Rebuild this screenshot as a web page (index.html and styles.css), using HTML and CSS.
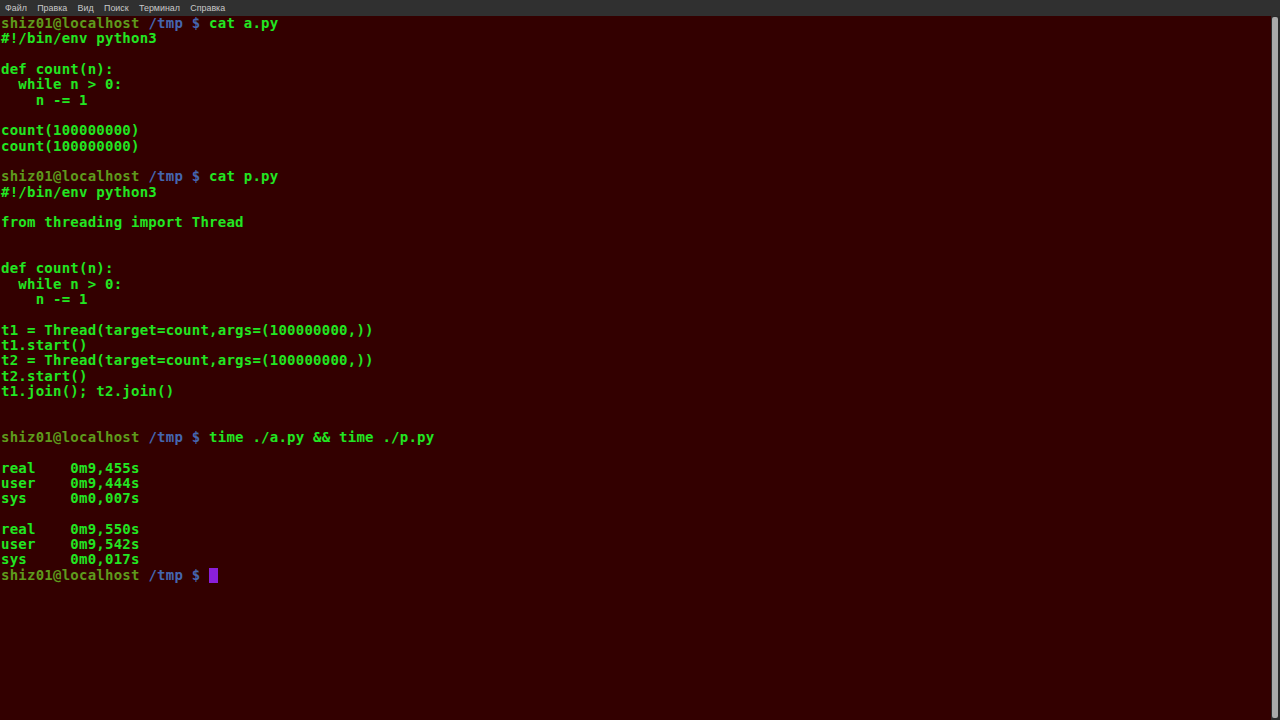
FILE: index.html
```html
<!DOCTYPE html>
<html lang="ru">

<head>
    <meta charset="UTF-8">
    <meta name="viewport" content="width=device-width, initial-scale=1.0">
    <title>Терминал</title>
    <link rel="stylesheet" href="styles.css">
</head>

<body class="term">
    <ul class="menuBar">
        <li>Файл</li>
        <li>Правка</li>
        <li>Вид</li>
        <li>Поиск</li>
        <li>Терминал</li>
        <li>Справка</li>
    </ul>
    <section class="termWrap">
        <pre class="screen"><span class="user">shiz01@localhost</span> <span class="path">/tmp $</span> cat a.py
#!/bin/env python3

def count(n):
  while n &gt; 0:
    n -= 1

count(100000000)
count(100000000)

<span class="user">shiz01@localhost</span> <span class="path">/tmp $</span> cat p.py
#!/bin/env python3

from threading import Thread


def count(n):
  while n &gt; 0:
    n -= 1

t1 = Thread(target=count,args=(100000000,))
t1.start()
t2 = Thread(target=count,args=(100000000,))
t2.start()
t1.join(); t2.join()


<span class="user">shiz01@localhost</span> <span class="path">/tmp $</span> time ./a.py &amp;&amp; time ./p.py

real    0m9,455s
user    0m9,444s
sys     0m0,007s

real    0m9,550s
user    0m9,542s
sys     0m0,017s
<span class="user">shiz01@localhost</span> <span class="path">/tmp $</span> <span class="cursor"> </span></pre>
        <div class="scrollBar">
            <div class="thumb"></div>
        </div>
    </section>
</body>

</html>
```

FILE: styles.css
```css
html,
body {
    margin: 0;
    padding: 0;
    height: 100%;
    overflow: hidden;
}

.term {
    display: flex;
    flex-direction: column;
    background: #330000;
}

.menuBar {
    display: flex;
    margin: 0;
    padding: 0 0 0 5px;
    height: 16px;
    list-style: none;
    background: #303030;
    font-family: "Liberation Sans", Arial, sans-serif;
    font-size: 8.9px;
    line-height: 16px;
    color: #c8c8c8;
}

.menuBar li {
    margin-right: 10.4px;
}

.termWrap {
    flex: 1;
    display: flex;
}

.screen {
    flex: 1;
    margin: 0;
    padding: 0 0 0 1px;
    font-family: "DejaVu Sans Mono", "Liberation Mono", monospace;
    font-weight: bold;
    font-size: 14px;
    letter-spacing: 0.24px;
    line-height: 15.33px;
    color: #22e622;
}

.user {
    color: #5e9a1c;
}

.path {
    color: #4566b0;
}

.cursor {
    display: inline-block;
    width: 9px;
    height: 15px;
    vertical-align: top;
    background: #8a1fd9;
}

.scrollBar {
    width: 9px;
    background: #2b2b2b;
    padding: 1px 2px 2px 1px;
    box-sizing: border-box;
    display: flex;
}

.scrollBar .thumb {
    flex: 1;
    background: #a9a9a9;
    border-radius: 2px;
}
```
